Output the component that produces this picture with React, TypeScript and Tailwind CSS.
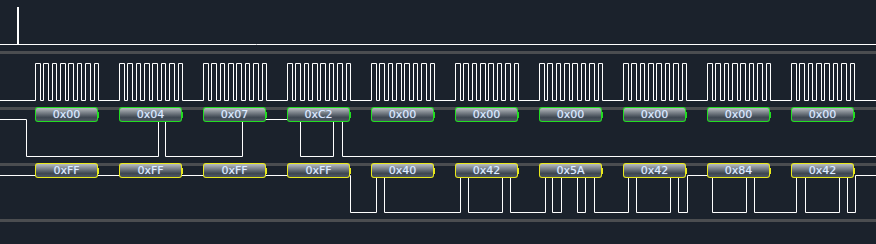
import React from "react";

const W = 876;
const HI = 9.5;
const LO = 46.5;

const mosiBytes = ["0x00", "0x04", "0x07", "0xC2", "0x00", "0x00", "0x00", "0x00", "0x00", "0x00"];
const misoBytes = ["0xFF", "0xFF", "0xFF", "0xFF", "0x40", "0x42", "0x5A", "0x42", "0x84", "0x42"];

// edge x positions, level toggles at each one
const mosiEdges = [26, 158, 165, 242, 300, 333, 342];
const misoEdges = [
  350, 376, 384, 460, 468, 502, 510, 545, 552, 561, 577, 585, 594, 628, 636, 670,
  678, 687, 712, 746, 754, 796, 805, 839, 847, 855,
];

function wavePath(edges: number[], startHigh: boolean) {
  let high = startHigh;
  let d = `M0 ${high ? HI : LO}`;
  for (const x of edges) {
    high = !high;
    d += ` H${x + 0.5} V${high ? HI : LO}`;
  }
  return d + ` H${W}`;
}

function clockPath() {
  let d = `M0 ${LO}`;
  for (let k = 0; k < 10; k++) {
    const s = 35 + k * 84;
    for (let i = 0; i < 8; i++) {
      const rise = Math.round(s + i * 8.36);
      const fall = Math.round(s + i * 8.36 + 4.5);
      d += ` H${rise + 0.5} V${HI} H${fall + 0.5} V${LO}`;
    }
  }
  return d + ` H${W}`;
}

function Separator() {
  return <div className="h-[3px] bg-[#4b4d50]" />;
}

const tones = {
  green: "bg-[#22dd22]",
  yellow: "bg-[#e8e81c]",
};

function Label({ text, tone }: { text: string; tone: "green" | "yellow" }) {
  const c = tones[tone];
  return (
    <div className="relative w-[63px] h-[15px]">
      {/* 1px frame in the decoder colour */}
      <div className={c + " h-full w-full rounded-[3px] p-px"}>
        <div className="h-full w-full rounded-[2px] bg-[linear-gradient(to_bottom,#b9bdc1_0%,#7c838a_35%,#3e4751_72%,#4d5660_100%)] flex items-center justify-center">
          <span className="font-['DejaVu_Sans',sans-serif] text-[11px] leading-none text-[#e2edff] [text-shadow:0_0_1px_#7fa6d9]">
            {text}
          </span>
        </div>
      </div>
      <div className={"absolute right-[-1px] top-[5px] h-[6px] w-[1px] " + c} />
    </div>
  );
}

function DecodedRow({
  bytes,
  tone,
  path,
}: {
  bytes: string[];
  tone: "green" | "yellow";
  path: string;
}) {
  return (
    <div className="relative h-[53px]">
      <svg width={W} height={53} className="block">
        <path d={path} fill="none" stroke="#ffffff" strokeWidth={1} />
      </svg>
      <div className="absolute left-[35px] top-[-3px] flex gap-[21px]">
        {bytes.map((b, i) => (
          <Label key={i} text={b} tone={tone} />
        ))}
      </div>
    </div>
  );
}

export default function App() {
  return (
    <div className="w-[876px] h-[244px] bg-[#1b222c] overflow-hidden flex flex-col">
      {/* marker channel */}
      <div className="h-[51px]">
        <svg width={W} height={51} className="block">
          <rect x={17} y={7} width={2} height={38} fill="#ffffff" />
          <path d={`M0 44.5 H${W}`} stroke="#ffffff" strokeWidth={1} />
        </svg>
      </div>
      <Separator />

      {/* clock */}
      <div className="h-[53px]">
        <svg width={W} height={53} className="block">
          <path d={clockPath()} fill="none" stroke="#ffffff" strokeWidth={1} />
        </svg>
      </div>
      <Separator />

      {/* MOSI */}
      <DecodedRow bytes={mosiBytes} tone="green" path={wavePath(mosiEdges, true)} />
      <Separator />

      {/* MISO */}
      <DecodedRow bytes={misoBytes} tone="yellow" path={wavePath(misoEdges, true)} />
      <Separator />

      <div className="flex-1" />
    </div>
  );
}
